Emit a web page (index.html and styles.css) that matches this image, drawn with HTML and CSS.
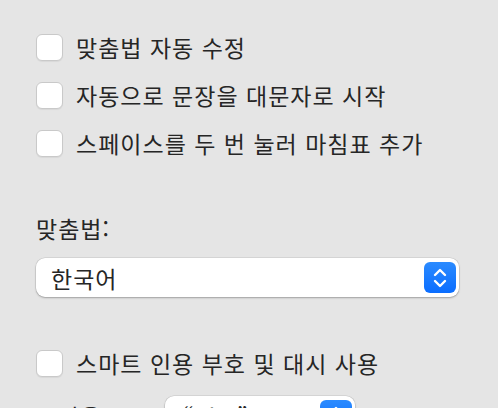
FILE: index.html
```html
<!DOCTYPE html>
<html lang="ko">
<head>
    <meta charset="UTF-8">
    <title>텍스트 입력</title>
    <link rel="stylesheet" href="styles.css">
</head>
<body>
    <div class="panel">
        <!-- 자동 교정 옵션 -->
        <ul class="options">
            <li class="option"><span class="checkbox"></span>맞춤법 자동 수정</li>
            <li class="option"><span class="checkbox"></span>자동으로 문장을 대문자로 시작</li>
            <li class="option"><span class="checkbox"></span>스페이스를 두 번 눌러 마침표 추가</li>
        </ul>

        <div class="field">
            <label class="field-label">맞춤법:</label>
            <div class="select wide">
                <span class="select-value">한국어</span>
                <span class="stepper">
                    <svg width="16" height="22" viewBox="0 0 16 22"><path d="M3 8 L8 3 L13 8 M3 14 L8 19 L13 14" fill="none" stroke="#fff" stroke-width="2.4" stroke-linecap="round" stroke-linejoin="round"/></svg>
                </span>
            </div>
        </div>

        <ul class="options quotes">
            <li class="option"><span class="checkbox"></span>스마트 인용 부호 및 대시 사용</li>
        </ul>

        <div class="inline-field">
            <span class="field-label">큰따옴표</span>
            <div class="select narrow">
                <span class="select-value">“abc”</span>
                <span class="stepper">
                    <svg width="16" height="22" viewBox="0 0 16 22"><path d="M3 8 L8 3 L13 8 M3 14 L8 19 L13 14" fill="none" stroke="#fff" stroke-width="2.4" stroke-linecap="round" stroke-linejoin="round"/></svg>
                </span>
            </div>
        </div>
    </div>
</body>
</html>
```
FILE: styles.css
```css
/* 기본 */
* {
    margin: 0;
    padding: 0;
    box-sizing: border-box;
}

body {
    font-family: "Noto Sans CJK KR", "Noto Sans", sans-serif;
    color: #262626;
    background-color: #e5e5e5;
    font-size: 23px;
    letter-spacing: 1px;
    overflow: hidden;
}

.panel {
    padding: 34px 0 0 36px;
    width: 459px;
}

/* 체크박스 목록 */
.options {
    list-style: none;
    display: flex;
    flex-direction: column;
    gap: 21px;
}

.option {
    display: flex;
    align-items: center;
    gap: 13px;
    height: 27px;
    line-height: 27px;
    white-space: nowrap;
}

.checkbox {
    width: 27px;
    height: 27px;
    flex-shrink: 0;
    background-color: #fff;
    border: 1px solid #c9c9c9;
    border-radius: 6px;
    box-shadow: 0 1px 1px rgba(0,0,0,0.06);
}

/* 맞춤법 선택 */
.field {
    margin-top: 57px;
    display: flex;
    flex-direction: column;
    gap: 16px;
}

.field-label {
    line-height: 28px;
    white-space: nowrap;
}

.select {
    display: flex;
    align-items: center;
    justify-content: space-between;
    height: 39px;
    padding: 0 3px 0 15px;
    background-color: #fff;
    border-radius: 9px;
    box-shadow: 0 0 0 0.5px rgba(0,0,0,0.12), 0 1px 2px rgba(0,0,0,0.25);
}

.wide {
    width: 423px;
}

.select-value {
    line-height: 28px;
}

.stepper {
    width: 32px;
    height: 31px;
    border-radius: 6px;
    background: linear-gradient(#2b8bff, #0a6dff);
    display: flex;
    align-items: center;
    justify-content: center;
}

.quotes {
    margin-top: 53px;
}

/* 큰따옴표 */
.inline-field {
    margin-top: 19px;
    display: flex;
    align-items: center;
}

.inline-field .field-label {
    width: 129px;
}

.narrow {
    width: 190px;
    padding-left: 18px;
}
```
